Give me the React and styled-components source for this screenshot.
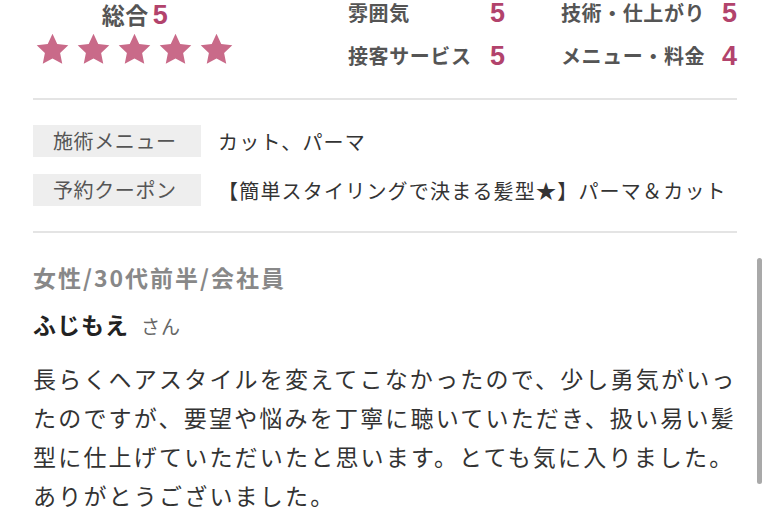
import React from 'react';
import styled, { createGlobalStyle } from 'styled-components';

const GlobalStyle = createGlobalStyle`
    html, body {
        margin: 0;
        padding: 0;
        background: #fff;
    }
    body {
        font-family: "Noto Sans CJK JP", "Noto Sans", sans-serif;
        overflow: hidden;
    }
`;

const ratings = [
    { label: '雰囲気', value: 5 },
    { label: '技術・仕上がり', value: 5 },
    { label: '接客サービス', value: 5 },
    { label: 'メニュー・料金', value: 4 },
];

const details = [
    { label: '施術メニュー', value: 'カット、パーマ' },
    { label: '予約クーポン', value: '【簡単スタイリングで決まる髪型★】パーマ＆カット' },
];

const Star = () => (
    <svg width="35" height="33" viewBox="0 0 24 23">
        <path
            fill="#c96a89"
            d="M12 0.6l3.3 7.1 7.7 0.9-5.7 5.3 1.5 7.6L12 17.7l-6.8 3.8 1.5-7.6L1 8.6l7.7-0.9z"
        />
    </svg>
);

const App = () => {
    return (
        <Page>
            <GlobalStyle />
            <Summary>
                <Overall>
                    <OverallTitle>
                        総合<Score>5</Score>
                    </OverallTitle>
                    <Stars>
                        {[0, 1, 2, 3, 4].map((i) => (
                            <Star key={i} />
                        ))}
                    </Stars>
                </Overall>
                <RatingGrid>
                    {ratings.map((item) => (
                        <React.Fragment key={item.label}>
                            <RatingLabel>{item.label}</RatingLabel>
                            <Score>{item.value}</Score>
                        </React.Fragment>
                    ))}
                </RatingGrid>
            </Summary>

            <Details>
                {details.map((item) => (
                    <DetailRow key={item.label}>
                        <DetailLabel>{item.label}</DetailLabel>
                        <DetailValue>{item.value}</DetailValue>
                    </DetailRow>
                ))}
            </Details>

            <Review>
                <Profile>女性/30代前半/会社員</Profile>
                <Name>
                    ふじもえ<Honorific>さん</Honorific>
                </Name>
                <Body>
                    長らくヘアスタイルを変えてこなかったので、少し勇気がいったのですが、要望や悩みを丁寧に聴いていただき、扱い易い髪型に仕上げていただいたと思います。とても気に入りました。ありがとうございました。
                </Body>
            </Review>

            <ScrollThumb />
        </Page>
    );
};

export default App;

const Page = styled.div`
    position: relative;
    width: 770px;
    height: 510px;
    padding: 0 33px;
    box-sizing: border-box;
    overflow: hidden;
`;

const Summary = styled.section`
    display: flex;
    height: 98px;
    border-bottom: 2px solid #e4e4e4;
`;

const Overall = styled.div`
    width: 200px;
    padding-left: 2px;
    display: flex;
    flex-direction: column;
    align-items: center;
`;

const OverallTitle = styled.div`
    display: flex;
    align-items: baseline;
    height: 28px;
    font-size: 23px;
    line-height: 28px;
    font-weight: 700;
    color: #555;
    letter-spacing: 0.5px;
`;

const Score = styled.span`
    font-family: "Liberation Sans", Arial, sans-serif;
    font-size: 27px;
    line-height: 28px;
    font-weight: 700;
    color: #b2436c;
    margin-left: 4px;
`;

const Stars = styled.div`
    display: flex;
    gap: 6px;
    margin-top: 5px;
`;

const RatingGrid = styled.div`
    display: grid;
    grid-template-columns: 138px 75px 157px auto;
    grid-auto-rows: 26px;
    row-gap: 17px;
    align-items: center;
    margin-left: 113px;
    height: 69px;
`;

const RatingLabel = styled.span`
    font-size: 20px;
    line-height: 26px;
    font-weight: 700;
    color: #555;
    letter-spacing: 0.6px;
`;

const Details = styled.section`
    display: flex;
    flex-direction: column;
    gap: 17px;
    padding: 25px 0 25px;
    border-bottom: 2px solid #e4e4e4;
`;

const DetailRow = styled.div`
    display: flex;
    align-items: center;
`;

const DetailLabel = styled.div`
    width: 168px;
    height: 32px;
    box-sizing: border-box;
    padding-left: 20px;
    background: #eeeeee;
    font-size: 20px;
    line-height: 32px;
    color: #555;
    letter-spacing: 0.6px;
`;

const DetailValue = styled.div`
    margin-left: 17px;
    font-size: 20px;
    color: #333;
    letter-spacing: 1.2px;
`;

const Review = styled.section`
    padding-top: 29px;
`;

const Profile = styled.div`
    font-size: 23px;
    line-height: 30px;
    font-weight: 700;
    color: #888;
    letter-spacing: 2px;
`;

const Name = styled.div`
    margin-top: 17px;
    font-size: 23px;
    line-height: 30px;
    font-weight: 700;
    color: #222;
    letter-spacing: 1px;
`;

const Honorific = styled.span`
    margin-left: 12px;
    font-size: 19px;
    font-weight: 400;
    color: #666;
`;

const Body = styled.p`
    margin: 18px 0 0;
    width: 704px;
    font-size: 23px;
    line-height: 39px;
    letter-spacing: 2.2px;
    color: #333;
`;

const ScrollThumb = styled.div`
    position: absolute;
    top: 258px;
    right: 8px;
    width: 5px;
    height: 226px;
    border-radius: 3px;
    background: #a9a9a9;
`;
